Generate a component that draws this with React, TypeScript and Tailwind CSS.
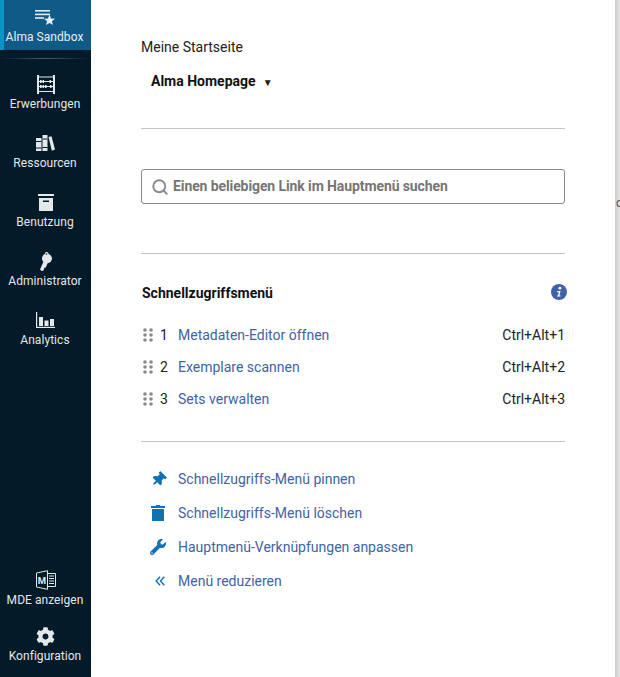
import { ReactNode } from "react";
import { FaThumbtack, FaWrench, FaCog } from "react-icons/fa";
import { Search } from "lucide-react";

function SidebarItem({ label, icon, h = "h-[59px]" }: { label: string; icon: ReactNode; h?: string }) {
  return (
    <div className={`flex ${h} flex-col items-center justify-end pb-[5px]`}>
      <div className="flex h-[24px] items-center justify-center">{icon}</div>
      <span className="whitespace-nowrap pr-[1px] text-[12px] leading-[16px] tracking-[0.05px] text-[#e2e6e8]">{label}</span>
    </div>
  );
}

const AbacusIcon = (
  <svg width="18" height="19" viewBox="0 0 18 19" fill="#e4e8ea">
    <rect x="0" y="0" width="2" height="19" />
    <rect x="16" y="0" width="2" height="19" />
    <rect x="2" y="1.5" width="14" height="1" />
    <rect x="2" y="16" width="14" height="1" />
    <rect x="2" y="6" width="14" height="1" />
    <rect x="2" y="11" width="14" height="1" />
    <rect x="3" y="5" width="1.6" height="3" />
    <rect x="5.5" y="5" width="1.6" height="3" />
    <rect x="12.5" y="5" width="1.6" height="3" />
    <rect x="3" y="10" width="1.6" height="3" />
    <rect x="5.5" y="10" width="1.6" height="3" />
    <rect x="8" y="10" width="1.6" height="3" />
    <rect x="13" y="10" width="1.6" height="3" />
  </svg>
);

const BooksIcon = (
  <svg width="19" height="16" viewBox="0 0 19 16" fill="#e4e8ea">
    <rect x="0" y="3" width="5.5" height="13" rx="0.5" />
    <rect x="6.5" y="0" width="5" height="16" rx="0.5" />
    <path d="M12.5 2 L15.5 1.2 L19 14.6 L15.8 15.8 Z" />
    <rect x="0" y="6" width="5.5" height="1" fill="#031a28" />
    <rect x="6.5" y="3.5" width="5" height="1" fill="#031a28" />
    <rect x="6.5" y="12" width="5" height="1" fill="#031a28" />
    <rect x="0" y="12.5" width="5.5" height="1" fill="#031a28" />
  </svg>
);

const BoxIcon = (
  <svg width="16" height="17" viewBox="0 0 16 17" fill="#e4e8ea">
    <rect x="0" y="0" width="16" height="2" />
    <path fillRule="evenodd" d="M1 4 H15 V17 H1 Z M5 6.5 V8 H11 V6.5 Z" />
  </svg>
);

const KeyIcon = (
  <svg width="12" height="19" viewBox="0 0 12 19" fill="#e4e8ea">
    <path
      fillRule="evenodd"
      d="M6.5 0 A2 2 0 0 1 8.6 2 C10.6 2.8 12 4.6 12 6.6 C12 9.2 10 11 7.6 11.2 L5.8 15.6 L4.4 15.8 L3.6 18.6 L1.6 19 L0 17.6 L3.4 9.8 C2.4 8.8 2 7.6 2 6.4 C2 4.4 3.2 2.8 4.8 2 A2 2 0 0 1 6.5 0 Z M6.5 1.2 A0.8 0.8 0 1 0 6.5 2.8 A0.8 0.8 0 1 0 6.5 1.2 Z"
    />
  </svg>
);

const ListStarIcon = (
  <svg width="20" height="15" viewBox="0 0 20 15" fill="#e8eef2">
    <rect x="0" y="0" width="15" height="1.6" />
    <rect x="0" y="3.6" width="15" height="1.6" />
    <rect x="0" y="7.2" width="9" height="1.6" />
    <path d="M14.5 4.5 L16 8.6 L20 8.8 L16.9 11.3 L18 15 L14.5 13 L11 15 L12.1 11.3 L9 8.8 L13 8.6 Z" />
  </svg>
);

const ChartIcon = (
  <svg width="19" height="16" viewBox="0 0 19 16" fill="#e4e8ea">
    <rect x="0" y="0" width="1.2" height="16" />
    <rect x="0" y="14.8" width="19" height="1.2" />
    <rect x="3" y="5" width="4" height="9" />
    <rect x="8.5" y="8.5" width="4" height="5.5" />
    <rect x="14" y="7" width="4" height="7" />
  </svg>
);

const WordIcon = (
  <svg width="20" height="20" viewBox="0 0 20 20" fill="none" stroke="#e4e8ea" strokeWidth="1">
    <path d="M0.5 3 L11.5 0.7 V19.3 L0.5 17 Z" />
    <path d="M11.5 3.5 H19.5 V16.5 H11.5" />
    <path d="M13 6 H18 M13 8.5 H18 M13 11 H18 M13 13.5 H18" />
    <text x="1.8" y="13.5" fontSize="9.5" fontWeight="700" fill="#e4e8ea" stroke="none" fontFamily="Roboto, sans-serif">M</text>
  </svg>
);

const GripIcon = (
  <svg width="10" height="14" viewBox="0 0 10 14" fill="#8a8a8a">
    <circle cx="2" cy="2" r="1.8" />
    <circle cx="8" cy="2" r="1.8" />
    <circle cx="2" cy="7" r="1.8" />
    <circle cx="8" cy="7" r="1.8" />
    <circle cx="2" cy="12" r="1.8" />
    <circle cx="8" cy="12" r="1.8" />
  </svg>
);

const InfoIcon = (
  <svg width="16" height="16" viewBox="0 0 16 16">
    <circle cx="8" cy="8" r="8" fill="#3f63a4" />
    <circle cx="8.9" cy="4.2" r="1.4" fill="#fff" />
    <path d="M6.2 7 H9.6 L8.4 11.4 H9.6 L9.3 12.6 H5.9 L6.2 11.4 H7 L7.8 8.2 H5.9 Z" fill="#fff" />
  </svg>
);

const TrashIcon = (
  <svg width="14" height="16" viewBox="0 0 14 16" fill="currentColor">
    <path d="M5 0 H9 V1 H14 V3 H0 V1 H5 Z" />
    <path d="M1 4 H13 V16 H1 Z" />
  </svg>
);

const ChevronsIcon = (
  <svg className="ml-[3px]" width="10" height="10" viewBox="0 0 10 10" fill="none" stroke="currentColor" strokeWidth="1.4">
    <path d="M5 0.8 L1.2 5 L5 9.2" />
    <path d="M9.3 0.8 L5.5 5 L9.3 9.2" />
  </svg>
);

const quick = [
  { n: 1, label: "Metadaten-Editor öffnen", keys: "Ctrl+Alt+1" },
  { n: 2, label: "Exemplare scannen", keys: "Ctrl+Alt+2" },
  { n: 3, label: "Sets verwalten", keys: "Ctrl+Alt+3" },
];

function ActionRow({ icon, label }: { icon: ReactNode; label: string }) {
  return (
    <div className="flex h-[34px] items-center">
      <div className="flex w-[37px] justify-center pr-[3px] text-[#0f72b5]">{icon}</div>
      <span className="text-[14px] text-[#3f63a4]">{label}</span>
    </div>
  );
}

function App() {
  return (
    <div className="flex h-[677px] w-[620px] overflow-hidden bg-[#d6d6d6] font-['Roboto',sans-serif]">
      <aside className="flex w-[91px] shrink-0 flex-col justify-between bg-[#031a28]">
        <div>
          <div className="flex h-[50px] flex-col items-center border-l-[4px] border-[#0a93c8] bg-[#0f5a87] pr-[6px] pt-[10px]">
            {ListStarIcon}
            <span className="mt-[4px] whitespace-nowrap text-[12px] leading-[16px] tracking-[0.05px] text-[#e8eef2]">Alma Sandbox</span>
          </div>
          <div className="mt-[8px] h-px bg-gradient-to-r from-transparent via-[#4a5c68] to-transparent" />
          <div className="mt-[4px]">
            <SidebarItem label="Erwerbungen" icon={AbacusIcon} h="h-[54px]" />
            <SidebarItem label="Ressourcen" icon={BooksIcon} />
            <SidebarItem label="Benutzung" icon={BoxIcon} />
            <SidebarItem label="Administrator" icon={KeyIcon} />
            <SidebarItem label="Analytics" icon={ChartIcon} />
          </div>
        </div>
        <div className="pb-[8px]">
          <SidebarItem label="MDE anzeigen" icon={WordIcon} h="h-[56px]" />
          <SidebarItem label="Konfiguration" icon={<FaCog size={19} color="#e4e8ea" />} h="h-[56px]" />
        </div>
      </aside>

      <main className="flex w-[524px] shrink-0 flex-col bg-white pl-[50px] pr-[50px] pt-[38px]">
        <div className="text-[14px] leading-[18px] text-[#222]">Meine Startseite</div>
        <div className="mt-[16px] flex items-center pl-[10px]">
          <span className="text-[14px] font-bold leading-[18px] text-[#111]">Alma Homepage</span>
          <span className="ml-[7px] mt-[3px] text-[10px] leading-none text-[#222]">▼</span>
        </div>
        <div className="mt-[38px] h-px bg-[#c4c4c4]" />
        <div className="mt-[40px] flex h-[35px] items-center rounded-[3px] border border-[#8a8a8a] pl-[9px]">
          <Search size={18} color="#8a8a8a" strokeWidth={2.5} />
          <span className="ml-[4px] text-[14px] font-bold tracking-[-0.1px] text-[#757575]">Einen beliebigen Link im Hauptmenü suchen</span>
        </div>
        <div className="mt-[49px] h-px bg-[#c4c4c4]" />
        <div className="mt-[29px] flex items-center justify-between pl-[1px]">
          <span className="text-[14px] font-bold leading-[20px] text-[#111]">Schnellzugriffsmenü</span>
          <span className="-mr-[2px] -mt-[2px]">{InfoIcon}</span>
        </div>
        <div className="mt-[16px]">
          {quick.map((q) => (
            <div key={q.n} className="flex h-[32px] items-center">
              <span className="ml-[2px]">{GripIcon}</span>
              <span className="ml-[7px] w-[18px] text-[14px] text-[#222]">{q.n}</span>
              <span className="text-[14px] text-[#3f63a4]">{q.label}</span>
              <span className="ml-auto text-[14px] text-[#222]">{q.keys}</span>
            </div>
          ))}
        </div>
        <div className="mt-[26px] h-px bg-[#c4c4c4]" />
        <div className="mt-[20px]">
          <ActionRow icon={<FaThumbtack size={15} className="rotate-45" />} label="Schnellzugriffs-Menü pinnen" />
          <ActionRow icon={TrashIcon} label="Schnellzugriffs-Menü löschen" />
          <ActionRow icon={<FaWrench size={16} />} label="Hauptmenü-Verknüpfungen anpassen" />
          <ActionRow icon={ChevronsIcon} label="Menü reduzieren" />
        </div>
      </main>

      <div className="relative flex-1 overflow-hidden bg-gradient-to-r from-[#cccccc] to-[#e4e4e4]">
        <span className="absolute left-[1px] top-[195px] text-[12px] leading-[16px] text-[#555]">c</span>
      </div>
    </div>
  );
}

export default App;
